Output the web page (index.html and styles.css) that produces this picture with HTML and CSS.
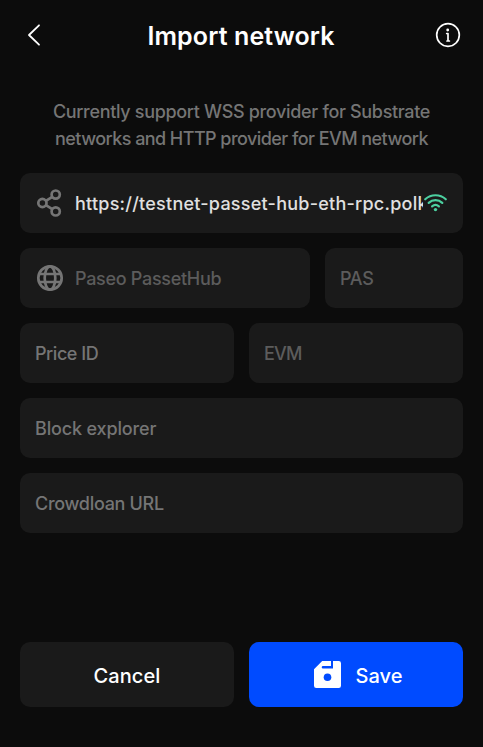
FILE: index.html
```html
<!DOCTYPE html>
<html lang="en">
<head>
<meta charset="utf-8">
<title>Import network</title>
<link rel="stylesheet" href="styles.css">
</head>
<body>
<main class="screen">
  <header class="header">
    <svg class="header-icon" width="28" height="28" viewBox="0 0 28 28" fill="none" stroke="#fff" stroke-width="1.8" stroke-linecap="round" stroke-linejoin="round"><path d="M19 4.3 9 14 19 23.7"/></svg>
    <h1 class="title">Import network</h1>
    <svg class="header-icon" width="28" height="28" viewBox="0 0 28 28" fill="none" stroke="#fff" stroke-width="1.7" stroke-linecap="round" stroke-linejoin="round"><circle cx="14" cy="14" r="11.3"/><path d="M12.7 12.5H14V20M13 20h2.4"/><circle cx="13.7" cy="9" r="1.4" fill="#fff" stroke="none"/></svg>
  </header>
  <p class="description"><span class="line line-a">Currently support WSS provider for Substrate</span><span class="line line-b">networks and HTTP provider for EVM network</span></p>
  <form class="form">
    <div class="field">
      <svg class="field-icon" width="30" height="30" viewBox="0 0 30 30" fill="none" stroke="#757575" stroke-width="2.7"><circle cx="7.4" cy="15" r="4.1"/><circle cx="20.7" cy="6.6" r="4.1"/><circle cx="20.7" cy="23.4" r="4.1"/><path d="m10.9 12.8 6.4-4M10.9 17.2l6.4 4"/></svg>
      <span class="value url">https://testnet-passet-hub-eth-rpc.polk</span>
      <svg class="wifi" width="25" height="20" viewBox="0 0 25 20" fill="none" stroke="#4cd0a0" stroke-width="2.2" stroke-linecap="round"><path d="M2.2 6.3c5.8-5.4 14.8-5.4 20.6 0M5.7 9.9c3.9-3.6 9.7-3.6 13.6 0M9.1 13.4c2-1.8 4.8-1.8 6.8 0"/><circle cx="12.5" cy="16.6" r="1.7" fill="#4cd0a0" stroke="none"/></svg>
    </div>
    <div class="row row-name">
      <div class="field">
        <svg class="field-icon" width="30" height="30" viewBox="0 0 30 30" fill="none" stroke="#757575" stroke-width="2.7"><circle cx="15" cy="15" r="11.7"/><ellipse cx="15" cy="15" rx="5.3" ry="11.7"/><path d="M4.2 11h21.6M4.2 19h21.6"/></svg>
        <span class="value disabled name">Paseo PassetHub</span>
      </div>
      <div class="field"><span class="value disabled symbol">PAS</span></div>
    </div>
    <div class="row">
      <div class="field"><span class="value price">Price ID</span></div>
      <div class="field"><span class="value disabled evm">EVM</span></div>
    </div>
    <div class="field"><span class="value explorer">Block explorer</span></div>
    <div class="field"><span class="value crowdloan">Crowdloan URL</span></div>
  </form>
  <footer class="actions">
    <button class="button cancel" type="button"><span class="cancel-label">Cancel</span></button>
    <button class="button save" type="button">
      <svg class="save-icon" width="27" height="27" viewBox="0 0 27 27"><path fill="#fff" d="M8.2 0H17v5H9a1.2 1.2 0 0 0 0 2.6h10V0H24.7A2.3 2.3 0 0 1 27 2.3v22.4a2.3 2.3 0 0 1-2.3 2.3H2.3A2.3 2.3 0 0 1 0 24.7V8.2Z"/><circle cx="13.5" cy="16.2" r="3.8" fill="#004bff"/></svg>
      <span class="save-label">Save</span>
    </button>
  </footer>
</main>
</body>
</html>
```
FILE: styles.css
```css
* { box-sizing: border-box; }
body { margin: 0; background: #0c0c0c; color: #fff; font-family: Inter, "Liberation Sans", sans-serif; }
.screen { height: 747px; padding: 0 20px 40px; display: flex; flex-direction: column; overflow: hidden; }
.header { height: 70px; flex: none; display: flex; align-items: center; justify-content: space-between; padding-right: 1px; }
.header-icon { flex: none; }
.title { margin: 2px 0 0; font-size: 25px; line-height: 35px; font-weight: 600; letter-spacing: 0.12px; white-space: nowrap; }
.description { margin: 28px 0 21px; text-align: center; font-size: 18px; line-height: 27px; font-weight: 500; color: #757575; }
.line { display: block; white-space: nowrap; }
.line-a { letter-spacing: -0.33px; }
.line-b { letter-spacing: -0.56px; }
.form { display: grid; gap: 15px; }
.row { display: grid; grid-template-columns: 1fr 1fr; gap: 15px; }
.row-name { grid-template-columns: 290px 1fr; }
.field { height: 60px; min-width: 0; padding: 0 15px; display: flex; align-items: center; background: #1a1a1a; border-radius: 10px; }
.field-icon { flex: none; margin-right: 10px; }
.value { font-size: 18px; line-height: 28px; font-weight: 500; color: #757575; white-space: nowrap; letter-spacing: -0.3px; padding-top: 1px; }
.disabled { color: #5c5c5c; }
.url { flex: 1; min-width: 0; overflow: hidden; color: #e0e0e0; letter-spacing: 0.24px; }
.price { letter-spacing: -0.45px; }
.evm { letter-spacing: -0.8px; }
.explorer { letter-spacing: -0.15px; }
.wifi { flex: none; }
.actions { margin-top: auto; display: grid; grid-template-columns: 1fr 1fr; gap: 15px; }
.button { height: 65px; padding: 2px 0 0; border: 0; border-radius: 10px; display: flex; align-items: center; justify-content: center; color: #fff; background: #1a1a1a; font: 500 20px/30px Inter, "Liberation Sans", sans-serif; letter-spacing: 0.1px; }
.save { background: #004bff; gap: 14px; padding-left: 5px; }
.save-icon { flex: none; margin-top: -2px; }
```
